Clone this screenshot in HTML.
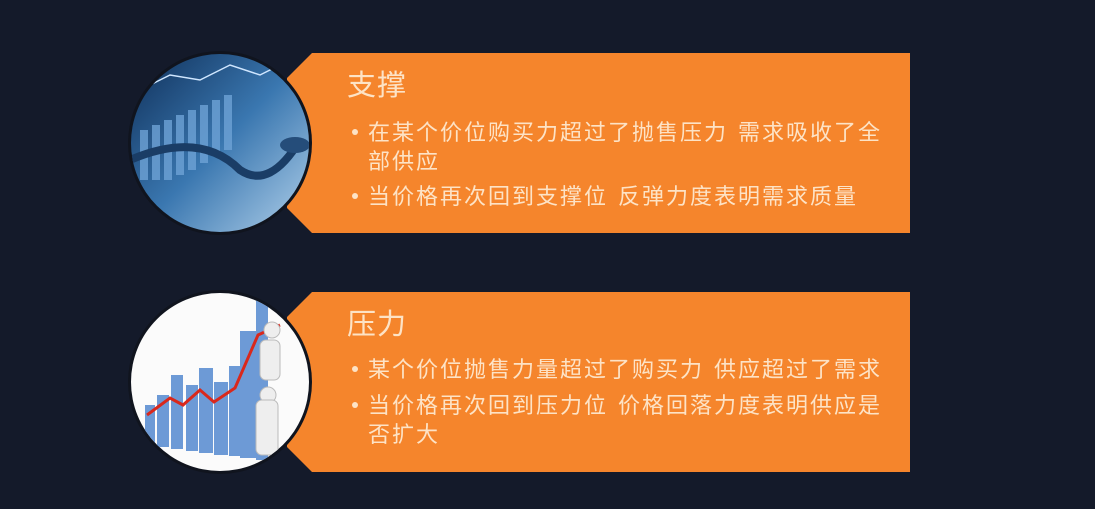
<!DOCTYPE html>
<html><head><meta charset="utf-8"><style>
html,body{margin:0;padding:0;background:#141a2a;width:1095px;height:509px;overflow:hidden}
.t{position:absolute;color:#fde3c6;font-family:"Liberation Sans","Noto Sans CJK SC",sans-serif;white-space:nowrap}
.h{font-size:29px;letter-spacing:1px}
.b{font-size:22px;letter-spacing:2px;line-height:29px}
.s{display:inline-block;width:10px}
.d{position:absolute;width:6px;height:6px;border-radius:3px;background:#fde3c6}
</style></head><body>
<svg width="1095" height="509" style="position:absolute;left:0;top:0">
<defs>
<linearGradient id="g1" x1="0" y1="0" x2="1" y2="1"><stop offset="0" stop-color="#0d2c55"/><stop offset="0.5" stop-color="#3a77b0"/><stop offset="1" stop-color="#b8d6ee"/></linearGradient>
<clipPath id="c1"><circle cx="220" cy="143" r="89"/></clipPath>
<clipPath id="c2"><circle cx="220" cy="382" r="89"/></clipPath>
</defs>
<polygon points="312,53 910,53 910,233 312,233 287,208 287,78" fill="#f5852c"/>
<polygon points="312,292 910,292 910,472 312,472 287,447 287,317" fill="#f5852c"/>
<circle cx="220" cy="143" r="92" fill="#10141e"/>
<g clip-path="url(#c1)">
<rect x="128" y="50" width="184" height="190" fill="url(#g1)"/>
<g fill="#6fa3d6" opacity="0.8">
<rect x="140" y="130" width="8" height="50"/><rect x="152" y="125" width="8" height="55"/><rect x="164" y="120" width="8" height="60"/><rect x="176" y="115" width="8" height="60"/><rect x="188" y="110" width="8" height="60"/><rect x="200" y="105" width="8" height="58"/><rect x="212" y="100" width="8" height="55"/><rect x="224" y="95" width="8" height="55"/>
</g>
<path d="M130 160 Q200 130 240 170 Q270 190 300 140" stroke="#1a3d66" stroke-width="8" fill="none"/>
<path d="M140 90 L170 75 L200 80 L230 65 L260 75 L290 60" stroke="#cfe6ff" stroke-width="1.5" fill="none"/>
<ellipse cx="295" cy="145" rx="15" ry="8" fill="#254d7a"/>
</g>
<circle cx="220" cy="382" r="92" fill="#10141e"/>
<g clip-path="url(#c2)">
<rect x="128" y="290" width="184" height="190" fill="#fbfbfb"/>
<g fill="#6d9ad6">
<rect x="145" y="405" width="10" height="40"/><rect x="157" y="395" width="12" height="52"/><rect x="171" y="375" width="12" height="74"/><rect x="186" y="385" width="12" height="66"/><rect x="199" y="368" width="14" height="85"/><rect x="214" y="382" width="14" height="73"/><rect x="229" y="366" width="14" height="90"/><rect x="240" y="331" width="16" height="127"/><rect x="256" y="300" width="12" height="160"/>
</g>
<path d="M147 415 L170 398 L183 405 L200 390 L214 402 L235 388 L258 335 L280 325" stroke="#d9281c" stroke-width="3" fill="none"/>
<g fill="#eee" stroke="#bbb" stroke-width="1">
<circle cx="272" cy="330" r="8"/><rect x="260" y="340" width="20" height="40" rx="6"/><circle cx="268" cy="395" r="8"/><rect x="256" y="400" width="22" height="55" rx="6"/>
</g>
</g>
</svg>
<div class="t h" style="left:347px;top:62px">支撑</div>
<div class="d" style="left:352px;top:129px"></div>
<div class="t b" style="left:368px;top:118px">在某个价位购买力超过了抛售压力<span class="s"></span>需求吸收了全<br>部供应</div>
<div class="d" style="left:352px;top:193px"></div>
<div class="t b" style="left:368px;top:182px">当价格再次回到支撑位<span class="s"></span>反弹力度表明需求质量</div>
<div class="t h" style="left:347px;top:301px">压力</div>
<div class="d" style="left:352px;top:366px"></div>
<div class="t b" style="left:368px;top:355px">某个价位抛售力量超过了购买力<span class="s"></span>供应超过了需求</div>
<div class="d" style="left:352px;top:402px"></div>
<div class="t b" style="left:368px;top:391px">当价格再次回到压力位<span class="s"></span>价格回落力度表明供应是<br>否扩大</div>
</body></html>
